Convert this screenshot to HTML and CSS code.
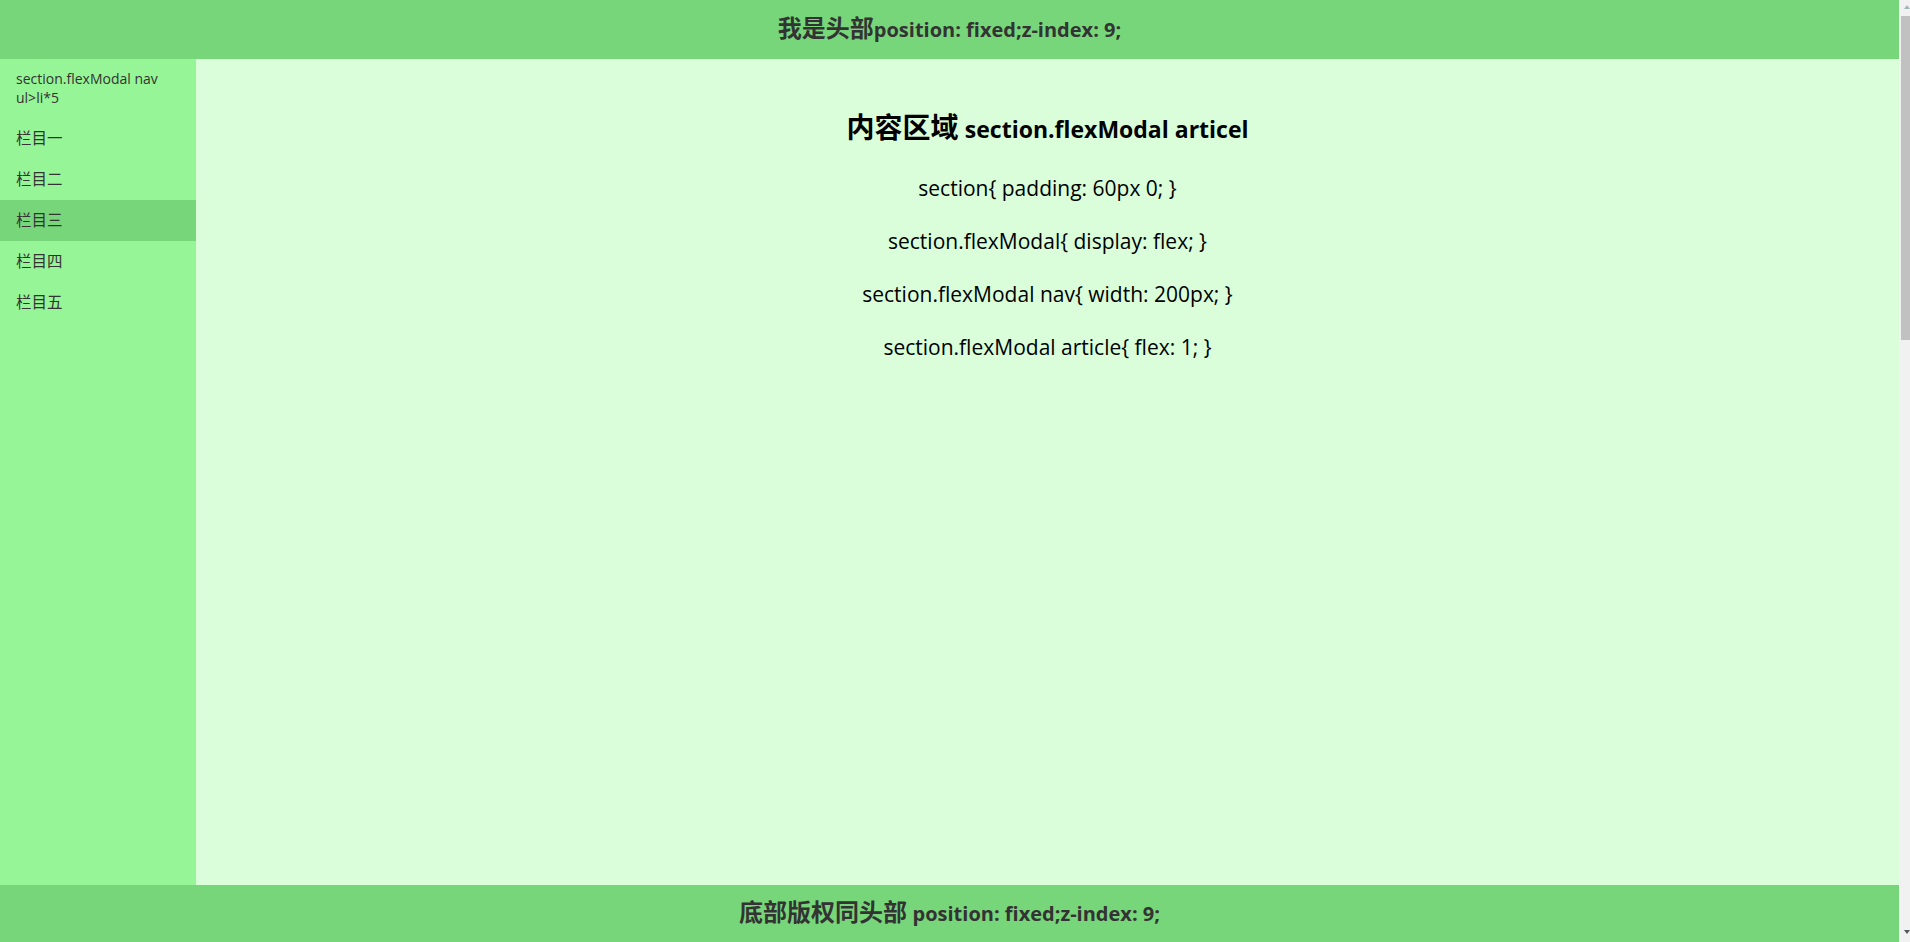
FILE: index.html
```html
<!DOCTYPE html>
<html lang="zh-CN">
<head>
<meta charset="utf-8">
<title>flexModal</title>
<link rel="stylesheet" href="styles.css">
</head>
<body>
<div class="page">
  <header class="top-bar"><span class="bar-text">我是头部<span class="latin">position: fixed;z-index: 9;</span></span></header>
  <section class="flex-modal">
    <nav class="side-nav">
      <p class="nav-note">section.flexModal nav ul&gt;li*5</p>
      <ul class="nav-list">
        <li class="nav-item">栏目一</li>
        <li class="nav-item">栏目二</li>
        <li class="nav-item is-active">栏目三</li>
        <li class="nav-item">栏目四</li>
        <li class="nav-item">栏目五</li>
      </ul>
    </nav>
    <article class="content">
      <h2 class="content-title">内容区域 <span class="latin">section.flexModal articel</span></h2>
      <p class="content-line">section{ padding: 60px 0; }</p>
      <p class="content-line">section.flexModal{ display: flex; }</p>
      <p class="content-line">section.flexModal nav{ width: 200px; }</p>
      <p class="content-line">section.flexModal article{ flex: 1; }</p>
    </article>
  </section>
  <footer class="bottom-bar"><span class="bar-text">底部版权同头部 <span class="latin">position: fixed;z-index: 9;</span></span></footer>
</div>
<div class="scrollbar" aria-hidden="true">
  <div class="scroll-arrow scroll-up"></div>
  <div class="scroll-track">
    <div class="scroll-thumb"></div>
  </div>
  <div class="scroll-arrow scroll-down"></div>
</div>
</body>
</html>
```

FILE: styles.css
```css
html, body {
  margin: 0;
  padding: 0;
  height: 100%;
  overflow: hidden;
}
body {
  font-family: "Open Sans", "Noto Sans CJK SC", sans-serif;
  color: #333;
  background: #d9fed9;
}
.page {
  height: 100%;
  margin-right: 11px;
  display: flex;
  flex-direction: column;
}
.top-bar,
.bottom-bar {
  flex: none;
  background: #77d67a;
  display: flex;
  align-items: center;
  justify-content: center;
  font-family: "Noto Sans CJK SC", sans-serif;
  font-size: 24px;
  font-weight: bold;
  color: #333;
  position: relative;
  z-index: 9;
}
.bar-text {
  line-height: 24px;
  padding-bottom: 2px;
}
.latin {
  font-family: "Open Sans", "Noto Sans CJK SC", sans-serif;
}
.bar-text .latin {
  font-size: 20px;
}
.top-bar {
  height: 59px;
}
.bottom-bar {
  height: 57px;
}
.flex-modal {
  flex: 1;
  display: flex;
  min-height: 0;
}
.side-nav {
  width: 196px;
  flex: none;
  background: #96f596;
  font-size: 14px;
}
.nav-note {
  margin: 0;
  padding: 10px 16px 11px;
  line-height: 19px;
}
.nav-list {
  list-style: none;
  margin: 0;
  padding: 0;
}
.nav-item {
  height: 41px;
  line-height: 41px;
  padding-left: 16px;
  font-size: 15.5px;
}
.nav-item.is-active {
  background: #77d67a;
}
.content {
  flex: 1;
  text-align: center;
  color: #000;
  padding-top: 48px;
}
.content-title {
  margin: 0 0 14px;
  font-family: "Noto Sans CJK SC", sans-serif;
  font-size: 28px;
  line-height: 38px;
}
.content-title .latin {
  font-size: 23px;
}
.content-line {
  margin: 0;
  font-size: 21px;
  line-height: 53px;
}
.scrollbar {
  position: fixed;
  top: 0;
  right: 0;
  bottom: 0;
  width: 11px;
  background: #f1f1f1;
  display: flex;
  flex-direction: column;
}
.scroll-arrow {
  height: 16px;
  flex: none;
  position: relative;
}
.scroll-arrow::after {
  content: "";
  position: absolute;
  left: 5px;
  border-left: 3.5px solid transparent;
  border-right: 3.5px solid transparent;
}
.scroll-up::after {
  top: 5px;
  border-bottom: 4px solid #a3b7b9;
}
.scroll-down::after {
  top: 4px;
  border-top: 4px solid #505a5e;
}
.scroll-track {
  flex: 1;
  padding-left: 2px;
}
.scroll-thumb {
  height: 324px;
  background: #c1c1c1;
}
```
